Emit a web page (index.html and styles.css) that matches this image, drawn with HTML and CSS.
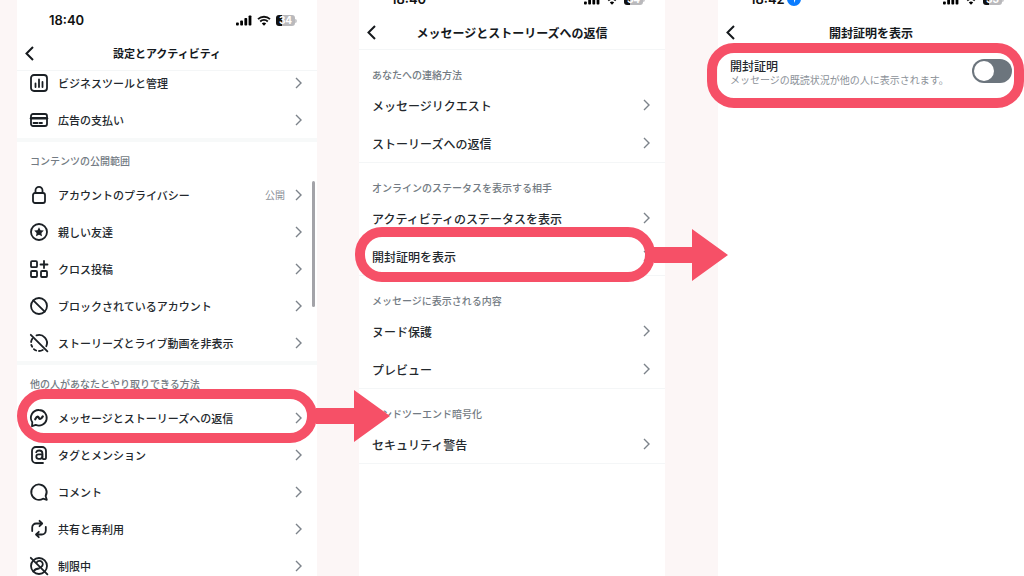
FILE: index.html
```html
<!DOCTYPE html>
<html lang="ja">
<head>
    <meta charset="UTF-8">
    <meta name="viewport" content="width=device-width, initial-scale=1.0">
    <title>開封証明を表示</title>
    <link rel="stylesheet" href="styles.css">
</head>
<body>
    <svg class="sprite" aria-hidden="true">
        <symbol id="chevron" viewBox="0 0 7 12"><path d="M1 1l5 5-5 5"/></symbol>
        <symbol id="back" viewBox="0 0 9 15"><path d="M8 1L1.500 7.500 8 14"/></symbol>
        <symbol id="signal" viewBox="0 0 16 11">
            <rect x="0" y="7.500" width="2.800" height="3" rx=".8"/>
            <rect x="4.200" y="5.500" width="2.800" height="5" rx=".8"/>
            <rect x="8.400" y="3" width="2.800" height="7.500" rx=".8"/>
            <rect x="12.600" y=".5" width="2.800" height="10" rx=".8"/>
        </symbol>
        <symbol id="wifi" viewBox="0 0 14 11">
            <path d="M1 4.200a8.600 8.600 0 0 1 12 0M3.200 6.500a5.400 5.400 0 0 1 7.600 0" fill="none" stroke="currentColor" stroke-width="1.800"/>
            <path d="M7 10.800L4.800 8.500a3.200 3.200 0 0 1 4.400 0z"/>
        </symbol>
        <symbol id="arrow" viewBox="0 0 74 52"><path d="M0 18h38V0l36 26-36 26V34H0z"/></symbol>
    </svg>

    <main class="container">
        <section class="screen screen-menu">
            <div class="status">
                <span class="time">18:40</span>
                <svg class="signal"><use href="#signal"/></svg>
                <svg class="wifi"><use href="#wifi"/></svg>
                <span class="battery">34</span>
            </div>
            <header class="header">
                <button class="back" aria-label="戻る"><svg><use href="#back"/></svg></button>
                <h1>設定とアクティビティ</h1>
            </header>

            <nav class="lista">
                <div class="group group-first">
                    <a class="row" href="#">
                        <svg class="icon" viewBox="0 0 18 18"><rect x="1" y="1" width="16" height="16" rx="3"/><path d="M5.500 9.500v3.500M9 5.500V13M12.500 8v5"/></svg>
                        <span class="text">ビジネスツールと管理</span>
                        <svg class="chevron"><use href="#chevron"/></svg>
                    </a>
                    <a class="row" href="#">
                        <svg class="icon" viewBox="0 0 18 18"><rect x="1" y="3" width="16" height="12" rx="2"/><path d="M1 7.200h16" stroke-width="2.400"/><path d="M3.500 12h4M9.500 12h2.500"/></svg>
                        <span class="text">広告の支払い</span>
                        <svg class="chevron"><use href="#chevron"/></svg>
                    </a>
                </div>

                <div class="group">
                    <h2>コンテンツの公開範囲</h2>
                    <a class="row" href="#">
                        <svg class="icon" viewBox="0 0 18 18"><rect x="3" y="7" width="12" height="10" rx="2"/><path d="M5.500 7V4.300a3.500 3.500 0 0 1 7 0V7"/></svg>
                        <span class="text">アカウントのプライバシー</span>
                        <span class="value">公開</span>
                        <svg class="chevron"><use href="#chevron"/></svg>
                    </a>
                    <a class="row" href="#">
                        <svg class="icon" viewBox="0 0 18 18"><circle cx="9" cy="9" r="8"/><path class="solid" d="M9 4.200l1.500 3 3.300.4-2.400 2.300.6 3.400L9 11.700l-3 1.600.6-3.400-2.400-2.300 3.300-.4z"/></svg>
                        <span class="text">親しい友達</span>
                        <svg class="chevron"><use href="#chevron"/></svg>
                    </a>
                    <a class="row" href="#">
                        <svg class="icon" viewBox="0 0 18 18"><rect x="1" y="1.200" width="6" height="6" rx="1"/><rect x="1" y="11" width="6" height="6" rx="1"/><rect x="11" y="11" width="6" height="6" rx="1"/><path d="M14 1v7M10.500 4.500h7"/></svg>
                        <span class="text">クロス投稿</span>
                        <svg class="chevron"><use href="#chevron"/></svg>
                    </a>
                    <a class="row" href="#">
                        <svg class="icon" viewBox="0 0 18 18"><circle cx="9" cy="9" r="8"/><path d="M3.300 3.300l11.400 11.400"/></svg>
                        <span class="text">ブロックされているアカウント</span>
                        <svg class="chevron"><use href="#chevron"/></svg>
                    </a>
                    <a class="row" href="#">
                        <svg class="icon" viewBox="0 0 18 18"><path d="M.8 .8l16.600 16.600"/><path d="M6.500 1.400a8 8 0 0 1 9.800 10.800"/><path d="M12.800 16a8 8 0 0 1-3.800 1"/><path d="M6.200 16.500a8 8 0 0 1-2.300-1.400"/><path d="M2.200 12.800a8 8 0 0 1-.9-1.900"/><path d="M1.100 8a8 8 0 0 1 1.200-3.200"/></svg>
                        <span class="text">ストーリーズとライブ動画を非表示</span>
                        <svg class="chevron"><use href="#chevron"/></svg>
                    </a>
                </div>

                <div class="group">
                    <h2>他の人があなたとやり取りできる方法</h2>
                    <a class="row" href="#">
                        <svg class="icon" viewBox="0 0 18 18"><path d="M9 1a7.800 7.800 0 1 1-3.300 14.900L2 17.200l.3-4A7.800 7.800 0 0 1 9 1z"/><path d="M5.200 10.300C6.200 8.400 7 7.300 7.900 7.700c.9.500 1.200 2.200 2.100 2.300.9.100 1.900-1.100 2.800-2.600" stroke-width="2.200"/></svg>
                        <span class="text">メッセージとストーリーズへの返信</span>
                        <svg class="chevron"><use href="#chevron"/></svg>
                        <span class="ring"><svg class="arrow"><use href="#arrow"/></svg></span>
                    </a>
                    <a class="row" href="#">
                        <svg class="icon" viewBox="0 0 18 18"><path d="M13 17H6a4 4 0 0 1-4-4V5a4 4 0 0 1 4-4h6a4 4 0 0 1 4 4v6.400a1.800 1.800 0 0 1-3.600 0V7.200c0-1.700-1.300-2.700-3.200-2.700-1.500 0-2.600.6-3 1.700"/><path d="M12.400 8.300H8.600a2.300 2.300 0 0 0 0 4.600c2.400 0 3.800-1.300 3.800-3"/></svg>
                        <span class="text">タグとメンション</span>
                        <svg class="chevron"><use href="#chevron"/></svg>
                    </a>
                    <a class="row" href="#">
                        <svg class="icon" viewBox="0 0 18 18"><path d="M15.600 13a7.700 7.700 0 1 0-2.600 2.700l3.800 1.100z"/></svg>
                        <span class="text">コメント</span>
                        <svg class="chevron"><use href="#chevron"/></svg>
                    </a>
                    <a class="row" href="#">
                        <svg class="icon" viewBox="0 0 18 18"><path d="M2.200 11V7.500a4 4 0 0 1 4-4H12M9.500 .8L12.200 3.500 9.500 6.200M15.800 7v3.500a4 4 0 0 1-4 4H6.200M8.800 11.800L6 14.500l2.800 2.700"/></svg>
                        <span class="text">共有と再利用</span>
                        <svg class="chevron"><use href="#chevron"/></svg>
                    </a>
                    <a class="row" href="#">
                        <svg class="icon" viewBox="0 0 18 18"><circle cx="9" cy="9" r="8"/><path d="M6.800 5.200a3.300 3.300 0 1 1 4.600 4.600M3.400 14.400c1.400-2 3.200-2.900 5.600-2.900M.8 .8l16.600 16.600"/></svg>
                        <span class="text">制限中</span>
                        <svg class="chevron"><use href="#chevron"/></svg>
                    </a>
                </div>
            </nav>
            <span class="scrollbar"></span>
        </section>

        <section class="screen screen-messages">
            <div class="status">
                <span class="time">18:40</span>
                <svg class="signal"><use href="#signal"/></svg>
                <svg class="wifi"><use href="#wifi"/></svg>
                <span class="battery">34</span>
            </div>
            <header class="header">
                <button class="back" aria-label="戻る"><svg><use href="#back"/></svg></button>
                <h1>メッセージとストーリーズへの返信</h1>
            </header>

            <nav class="lista">
                <div class="group">
                    <h2>あなたへの連絡方法</h2>
                    <a class="row" href="#"><span class="text">メッセージリクエスト</span><svg class="chevron"><use href="#chevron"/></svg></a>
                    <a class="row" href="#"><span class="text">ストーリーズへの返信</span><svg class="chevron"><use href="#chevron"/></svg></a>
                </div>
                <div class="group">
                    <h2>オンラインのステータスを表示する相手</h2>
                    <a class="row" href="#"><span class="text">アクティビティのステータスを表示</span><svg class="chevron"><use href="#chevron"/></svg></a>
                    <a class="row" href="#">
                        <span class="text">開封証明を表示</span>
                        <svg class="chevron"><use href="#chevron"/></svg>
                        <span class="ring"><svg class="arrow"><use href="#arrow"/></svg></span>
                    </a>
                </div>
                <div class="group">
                    <h2>メッセージに表示される内容</h2>
                    <a class="row" href="#"><span class="text">ヌード保護</span><svg class="chevron"><use href="#chevron"/></svg></a>
                    <a class="row" href="#"><span class="text">プレビュー</span><svg class="chevron"><use href="#chevron"/></svg></a>
                </div>
                <div class="group">
                    <h2>エンドツーエンド暗号化</h2>
                    <a class="row" href="#"><span class="text">セキュリティ警告</span><svg class="chevron"><use href="#chevron"/></svg></a>
                </div>
            </nav>
        </section>

        <section class="screen screen-receipt">
            <div class="status">
                <span class="time">18:42</span>
                <svg class="location" viewBox="0 0 14 14"><circle cx="7" cy="7" r="7" fill="#0a7cff"/><path d="M10.500 3.500L3 7h4v4z" fill="#fff"/></svg>
                <svg class="signal"><use href="#signal"/></svg>
                <svg class="wifi"><use href="#wifi"/></svg>
                <span class="battery">33</span>
            </div>
            <header class="header">
                <button class="back" aria-label="戻る"><svg><use href="#back"/></svg></button>
                <h1>開封証明を表示</h1>
            </header>

            <div class="setting">
                <label for="receipt">
                    <span class="setting-title">開封証明</span>
                    <span class="setting-text">メッセージの既読状況が他の人に表示されます。</span>
                </label>
                <input type="checkbox" id="receipt" class="toggle">
                <span class="ring"></span>
            </div>
        </section>
    </main>
</body>
</html>
```
FILE: styles.css
```css
*{
    margin: 0;
    padding: 0;
    box-sizing: border-box;
}
body{
    background-color: #fcf6f6;
    color: #23282d;
    font-family: "Noto Sans CJK JP", sans-serif;
    font-size: 12px;
    font-weight: 500;
}
.sprite{
    position: absolute;
    width: 0;
    height: 0;
}
.container{
    height: 100vh;
    padding-left: 17px;
    display: flex;
    overflow: hidden;
}
/* Phone screens */
.screen{
    flex: 306;
    min-width: 0;
    background-color: #fff;
}
.screen-menu{
    flex: 300;
    position: relative;
    font-size: 11px;
}
.screen-messages{
    margin: -21px 0 0 42px;
}
.screen-receipt{
    margin: -21px 0 0 53px;
}
/* Status bar */
.status{
    height: 36px;
    padding: 4px 22px 0 32px;
    display: flex;
    align-items: center;
    color: #111;
}
.time{
    font-family: Inter, sans-serif;
    font-size: 13px;
    font-weight: 600;
}
.location{
    width: 14px;
    height: 14px;
    margin-left: 2px;
}
.signal{
    width: 16px;
    height: 11px;
    margin-left: auto;
}
.wifi{
    width: 14px;
    height: 11px;
    margin: 0 5px;
}
.battery{
    position: relative;
    width: 19px;
    height: 11px;
    border-radius: 3px;
    background: linear-gradient(90deg, #111 34%, #b9b9bc 34%);
    color: #fff;
    font: 700 10px/11px Inter, sans-serif;
    text-align: center;
}
.battery::after{
    content: "";
    position: absolute;
    top: 4px;
    left: 100%;
    width: 2px;
    height: 4px;
    border-radius: 0 2px 2px 0;
    background-color: #c9c9cc;
}
/* Title bar */
.header{
    height: 35px;
    padding: 0 8px;
    border-bottom: 1px solid #f4f6f7;
    display: grid;
    grid-template-columns: 24px 1fr 24px;
    align-items: center;
}
.header h1{
    color: #15191d;
    font-size: 12px;
    font-weight: 700;
    text-align: center;
    white-space: nowrap;
}
.screen-menu .header h1{
    font-size: 11px;
}
.screen-receipt .header{
    border-color: transparent;
}
.back{
    border: none;
    background: none;
    display: flex;
}
.back svg{
    width: 9px;
    height: 15px;
    fill: none;
    stroke: #15191d;
    stroke-width: 2;
}
/* Lists */
.group{
    border-bottom: 1px solid #f4f6f7;
}
.group h2{
    height: 36px;
    padding: 16px 13px 0;
    color: #737b83;
    font-size: 10px;
    font-weight: 500;
    line-height: 18px;
}
.row{
    position: relative;
    height: 38px;
    padding: 0 15px 0 13px;
    display: flex;
    align-items: center;
    gap: 10px;
    color: inherit;
    text-decoration: none;
}
.text{
    flex: 1;
    white-space: nowrap;
}
.value{
    color: #8b9198;
    font-size: 10px;
    font-weight: 400;
}
.chevron{
    width: 7px;
    height: 12px;
    fill: none;
    stroke: #7c838a;
    stroke-width: 1.4;
}
.icon{
    width: 18px;
    height: 18px;
    fill: none;
    stroke: #1b2025;
    stroke-width: 1.8;
    stroke-linecap: round;
    stroke-linejoin: round;
    overflow: visible;
}
.icon .solid{
    fill: #1b2025;
    stroke: none;
}
.screen-menu .group{
    border-bottom: 4px solid #f7f9f9;
}
.screen-menu .group-first{
    margin-top: -7px;
}
.screen-menu .group h2{
    height: 34px;
    padding-top: 10px;
}
.screen-menu .row{
    height: 37px;
}
.scrollbar{
    position: absolute;
    top: 181px;
    right: 2px;
    width: 3px;
    height: 126px;
    border-radius: 2px;
    background-color: #a3a3a8;
}
/* Read receipt setting */
.setting{
    position: relative;
    padding: 9px 12px;
    display: flex;
    align-items: flex-start;
    justify-content: space-between;
}
.setting label{
    display: flex;
    flex-direction: column;
}
.setting-title{
    line-height: 14px;
}
.setting-text{
    color: #8b9198;
    font-size: 10px;
    font-weight: 400;
    line-height: 14px;
    white-space: nowrap;
}
.toggle{
    appearance: none;
    width: 40px;
    height: 24px;
    padding: 2px;
    border-radius: 12px;
    background-color: #6c757d;
    display: flex;
}
.toggle::before{
    content: "";
    width: 20px;
    height: 20px;
    border-radius: 50%;
    background-color: #fff;
}
.toggle:checked{
    justify-content: flex-end;
}
/* Highlight and arrow over the rows */
.ring{
    position: absolute;
    inset: -10px 0 -7px 0;
    z-index: 2;
    border: 10px solid #f65067;
    border-radius: 27px;
    pointer-events: none;
}
.screen-messages .ring{
    left: -4px;
    right: 10px;
}
.setting .ring{
    inset: -7px 0 -12px -11px;
}
.arrow{
    position: absolute;
    top: 50%;
    left: calc(100% + 9px);
    width: 74px;
    height: 52px;
    transform: translateY(-50%);
    fill: #f65067;
}
```
